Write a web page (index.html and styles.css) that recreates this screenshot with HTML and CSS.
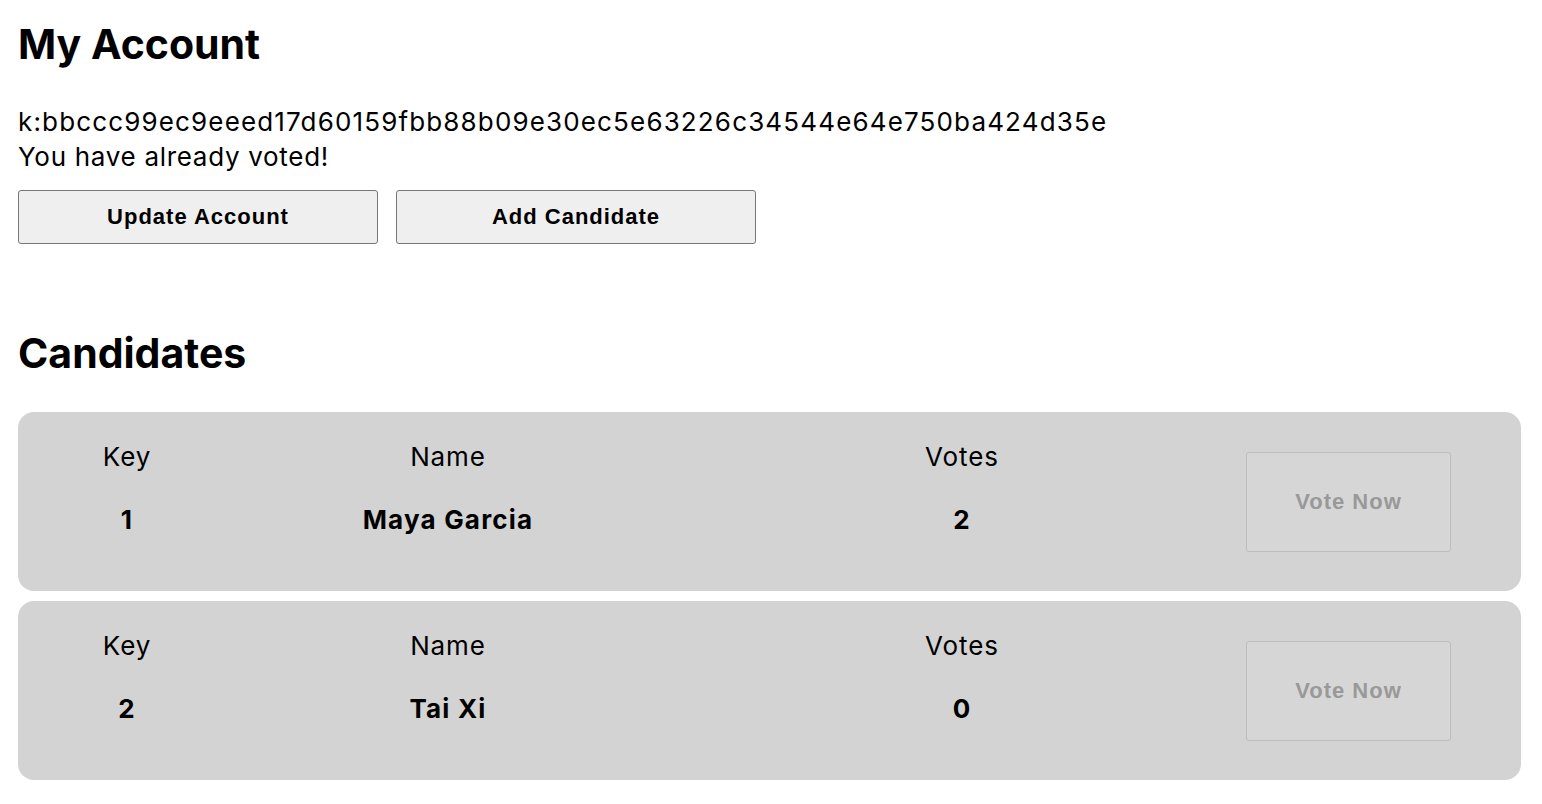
FILE: index.html
```html
<!DOCTYPE html>
<html>
<head>
<meta charset="utf-8">
<link rel="stylesheet" href="styles.css">
</head>
<body>
<div class="page">
  <section class="account">
    <h1 class="title">My Account</h1>
    <div class="info">
      <div class="line key-line">k:bbccc99ec9eeed17d60159fbb88b09e30ec5e63226c34544e64e750ba424d35e</div>
      <div class="line">You have already voted!</div>
    </div>
    <div class="actions">
      <button class="btn">Update Account</button>
      <button class="btn">Add Candidate</button>
    </div>
  </section>
  <section class="candidates">
    <h1 class="title">Candidates</h1>
    <div class="list">
      <div class="card">
        <div class="col">
          <div class="label">Key</div>
          <div class="value">1</div>
        </div>
        <div class="col">
          <div class="label">Name</div>
          <div class="value">Maya Garcia</div>
        </div>
        <div class="col">
          <div class="label">Votes</div>
          <div class="value">2</div>
        </div>
        <button class="vote" disabled>Vote Now</button>
      </div>
      <div class="card">
        <div class="col">
          <div class="label">Key</div>
          <div class="value">2</div>
        </div>
        <div class="col">
          <div class="label">Name</div>
          <div class="value">Tai Xi</div>
        </div>
        <div class="col">
          <div class="label">Votes</div>
          <div class="value">0</div>
        </div>
        <button class="vote" disabled>Vote Now</button>
      </div>
    </div>
  </section>
</div>
</body>
</html>
```

FILE: styles.css
```css
html, body {
  margin: 0;
  padding: 0;
  background: #ffffff;
}
body {
  font-family: Inter, "Noto Sans", sans-serif;
  color: #000;
}
.page {
  padding: 18px 21px 0 18px;
}
.title {
  margin: 0;
  font-size: 41px;
  font-weight: 700;
  line-height: 52px;
}
.info {
  margin-top: 34px;
  font-size: 26px;
  line-height: 35px;
  letter-spacing: 0.7px;
}
.info .key-line {
  letter-spacing: 1.15px;
}
.actions {
  display: flex;
  gap: 18px;
  margin-top: 16px;
}
.btn {
  width: 360px;
  height: 54px;
  background: #efefef;
  border: 1px solid #767676;
  border-radius: 3px;
  font-family: "Liberation Sans", Arial, sans-serif;
  font-weight: 700;
  font-size: 22px;
  letter-spacing: 1px;
  color: #000;
}
.candidates {
  margin-top: 83px;
}
.list {
  margin-top: 33px;
  display: flex;
  flex-direction: column;
  gap: 10px;
}
.card {
  background: #d3d3d3;
  border-radius: 16px;
  height: 179px;
  box-sizing: border-box;
  display: grid;
  grid-template-columns: 182px 460px 568px 205px;
  align-items: center;
  padding-left: 18px;
}
.col {
  text-align: center;
  align-self: start;
  padding-top: 29px;
}
.label {
  font-size: 26px;
  line-height: 32px;
  letter-spacing: 0.9px;
}
.value {
  margin-top: 31px;
  font-size: 26px;
  font-weight: 700;
  line-height: 32px;
  letter-spacing: 1.2px;
}
.vote {
  width: 205px;
  height: 100px;
  background: #d6d6d6;
  border: 1px solid #bdbdbd;
  border-radius: 3px;
  font-family: "Liberation Sans", Arial, sans-serif;
  font-weight: 700;
  font-size: 22px;
  letter-spacing: 1px;
  color: #999;
}
```
